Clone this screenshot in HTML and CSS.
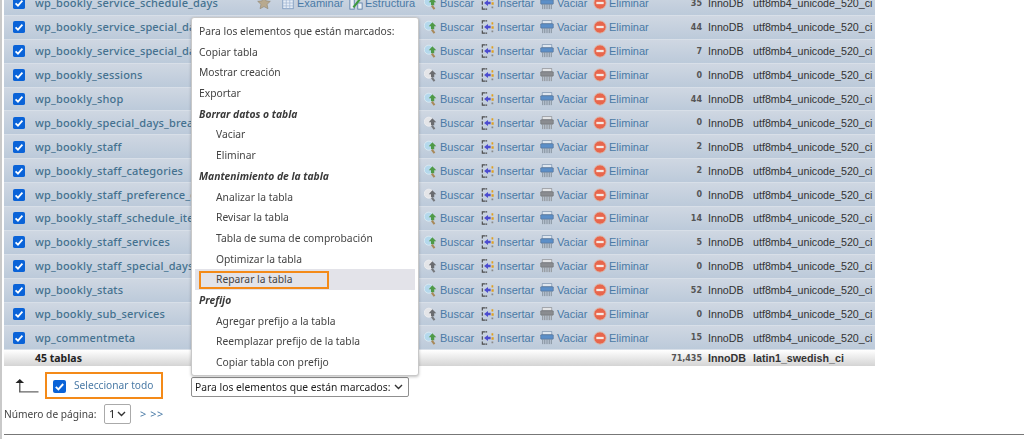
FILE: index.html
```html
<!DOCTYPE html>
<html lang="es">
<head>
<meta charset="utf-8">
<title>phpMyAdmin</title>
<link rel="stylesheet" href="styles.css">
</head>
<body>
<svg class="defs" width="0" height="0" aria-hidden="true">
  <symbol id="i-star" viewBox="0 0 16 16"><path d="M8 .8l2.200 4.700 5 .6-3.700 3.400 1 5L8 12.100l-4.500 2.400 1-5L.8 6.100l5-.6z" fill="#b8a98e" stroke="#8f8672" stroke-width=".7"/></symbol>
  <symbol id="i-browse" viewBox="0 0 16 16"><rect x="2" y="1.500" width="12" height="13" fill="#e6edf6" stroke="#7f9cc0"/><path d="M2 4.500h12M2 8h12M2 11.300h12M6 4.500v10M10 4.500v10" stroke="#9db4d2" stroke-width=".8"/></symbol>
  <symbol id="i-struct" viewBox="0 0 16 16"><rect x="1" y="1" width="5" height="14" fill="#eef2f7" stroke="#5b7ea8"/><rect x="10" y="8" width="5" height="7" fill="#eef2f7" stroke="#5b7ea8"/><path d="M5 13l8-10" stroke="#3d9a3d" stroke-width="2.400"/></symbol>
  <symbol id="i-search" viewBox="0 0 16 16"><circle cx="5.500" cy="6.500" r="5.200" fill="#b4d8ec" stroke="#e4f0f6" stroke-width=".8"/><path d="M9.500 2.500l4.500 4.700h-2.300v3.300H8V7.200H5.500z" fill="#4f9a48"/><path d="M9 11l3 4" stroke="#a8895a" stroke-width="2.400"/></symbol>
  <symbol id="i-search-off" viewBox="0 0 16 16"><circle cx="5.500" cy="6.500" r="5.200" fill="#e4e5e8" stroke="#f2f2f3" stroke-width=".8"/><path d="M9.500 2.500l4.500 4.700h-2.300v3.300H8V7.200H5.500z" fill="#6a6c70"/><path d="M9 11l3 4" stroke="#77797d" stroke-width="2.400"/></symbol>
  <symbol id="i-insert" viewBox="0 0 16 16"><path d="M4.500 1H1.500v3M1.500 6v4M1.500 12v3h3" fill="none" stroke="#4a4a4a" stroke-width="1.300"/><path d="M5 1h2M5 15h2" stroke="#4a4a4a" stroke-width="1.300"/><path d="M3.500 8L8 4.500v2h3v3H8v2z" fill="#4c4cd0"/><path d="M12 2.500h2v2.500h-2zM12 7h2.500v3H12z" fill="#e0a020"/><path d="M12 12h2v2h-2z" fill="#8a8a8a"/></symbol>
  <symbol id="i-empty" viewBox="0 0 16 16"><rect x="2.500" y=".8" width="11" height="3.500" fill="#dfe6ee" stroke="#6f88a6" stroke-width=".7"/><rect x=".8" y="4.300" width="14.400" height="5" rx=".6" fill="#5c8fc8" stroke="#557090" stroke-width=".7"/><path d="M3 9.500v5.500M5 9.500v5.500M7 9.500v5.500M9 9.500v5.500M11 9.500v5.500M13 9.500v5.500" stroke="#7a8794" stroke-width=".9"/></symbol>
  <symbol id="i-empty-off" viewBox="0 0 16 16"><rect x="2.500" y=".8" width="11" height="3.500" fill="#e3e4e6" stroke="#85878a" stroke-width=".7"/><rect x=".8" y="4.300" width="14.400" height="5" rx=".6" fill="#8a8c90" stroke="#6f7175" stroke-width=".7"/><path d="M3 9.500v5.500M5 9.500v5.500M7 9.500v5.500M9 9.500v5.500M11 9.500v5.500M13 9.500v5.500" stroke="#85878a" stroke-width=".9"/></symbol>
  <symbol id="i-drop" viewBox="0 0 16 16"><circle cx="8" cy="8" r="7" fill="#e8664c" stroke="#dcb5a5"/><rect x="3.800" y="6.700" width="8.400" height="2.600" fill="#f6e9e4"/></symbol>
  <symbol id="i-check" viewBox="0 0 13 13"><rect width="13" height="13" rx="2" fill="#0a63d8"/><path d="M2.800 6.800l2.600 2.600 4.800-5.400" fill="none" stroke="#fff" stroke-width="1.900"/></symbol>
</svg>

<div class="page">
  <div class="tables">
    <div class="row first"><svg class="cb"><use href="#i-check"/></svg><a class="name">wp_bookly_service_schedule_days</a><svg class="star"><use href="#i-star"/></svg><span class="act browse"><svg><use href="#i-browse"/></svg>Examinar</span><span class="act struct"><svg><use href="#i-struct"/></svg>Estructura</span><span class="act search"><svg><use href="#i-search"/></svg>Buscar</span><span class="act insert"><svg><use href="#i-insert"/></svg>Insertar</span><span class="act empty"><svg><use href="#i-empty"/></svg>Vaciar</span><span class="act drop"><svg><use href="#i-drop"/></svg>Eliminar</span><span class="num">35</span><span class="eng">InnoDB</span><span class="coll">utf8mb4_unicode_520_ci</span></div>
    <div class="row"><svg class="cb"><use href="#i-check"/></svg><a class="name">wp_bookly_service_special_days</a><span class="act search"><svg><use href="#i-search"/></svg>Buscar</span><span class="act insert"><svg><use href="#i-insert"/></svg>Insertar</span><span class="act empty"><svg><use href="#i-empty"/></svg>Vaciar</span><span class="act drop"><svg><use href="#i-drop"/></svg>Eliminar</span><span class="num">44</span><span class="eng">InnoDB</span><span class="coll">utf8mb4_unicode_520_ci</span></div>
    <div class="row"><svg class="cb"><use href="#i-check"/></svg><a class="name">wp_bookly_service_special_days_breaks</a><span class="act search"><svg><use href="#i-search"/></svg>Buscar</span><span class="act insert"><svg><use href="#i-insert"/></svg>Insertar</span><span class="act empty"><svg><use href="#i-empty"/></svg>Vaciar</span><span class="act drop"><svg><use href="#i-drop"/></svg>Eliminar</span><span class="num">7</span><span class="eng">InnoDB</span><span class="coll">utf8mb4_unicode_520_ci</span></div>
    <div class="row"><svg class="cb"><use href="#i-check"/></svg><a class="name">wp_bookly_sessions</a><span class="act search"><svg><use href="#i-search-off"/></svg>Buscar</span><span class="act insert"><svg><use href="#i-insert"/></svg>Insertar</span><span class="act empty"><svg><use href="#i-empty-off"/></svg>Vaciar</span><span class="act drop"><svg><use href="#i-drop"/></svg>Eliminar</span><span class="num">0</span><span class="eng">InnoDB</span><span class="coll">utf8mb4_unicode_520_ci</span></div>
    <div class="row"><svg class="cb"><use href="#i-check"/></svg><a class="name">wp_bookly_shop</a><span class="act search"><svg><use href="#i-search"/></svg>Buscar</span><span class="act insert"><svg><use href="#i-insert"/></svg>Insertar</span><span class="act empty"><svg><use href="#i-empty"/></svg>Vaciar</span><span class="act drop"><svg><use href="#i-drop"/></svg>Eliminar</span><span class="num">44</span><span class="eng">InnoDB</span><span class="coll">utf8mb4_unicode_520_ci</span></div>
    <div class="row"><svg class="cb"><use href="#i-check"/></svg><a class="name">wp_bookly_special_days_breaks</a><span class="act search"><svg><use href="#i-search-off"/></svg>Buscar</span><span class="act insert"><svg><use href="#i-insert"/></svg>Insertar</span><span class="act empty"><svg><use href="#i-empty-off"/></svg>Vaciar</span><span class="act drop"><svg><use href="#i-drop"/></svg>Eliminar</span><span class="num">0</span><span class="eng">InnoDB</span><span class="coll">utf8mb4_unicode_520_ci</span></div>
    <div class="row"><svg class="cb"><use href="#i-check"/></svg><a class="name">wp_bookly_staff</a><span class="act search"><svg><use href="#i-search"/></svg>Buscar</span><span class="act insert"><svg><use href="#i-insert"/></svg>Insertar</span><span class="act empty"><svg><use href="#i-empty"/></svg>Vaciar</span><span class="act drop"><svg><use href="#i-drop"/></svg>Eliminar</span><span class="num">2</span><span class="eng">InnoDB</span><span class="coll">utf8mb4_unicode_520_ci</span></div>
    <div class="row"><svg class="cb"><use href="#i-check"/></svg><a class="name">wp_bookly_staff_categories</a><span class="act search"><svg><use href="#i-search"/></svg>Buscar</span><span class="act insert"><svg><use href="#i-insert"/></svg>Insertar</span><span class="act empty"><svg><use href="#i-empty"/></svg>Vaciar</span><span class="act drop"><svg><use href="#i-drop"/></svg>Eliminar</span><span class="num">2</span><span class="eng">InnoDB</span><span class="coll">utf8mb4_unicode_520_ci</span></div>
    <div class="row"><svg class="cb"><use href="#i-check"/></svg><a class="name">wp_bookly_staff_preference_orders</a><span class="act search"><svg><use href="#i-search-off"/></svg>Buscar</span><span class="act insert"><svg><use href="#i-insert"/></svg>Insertar</span><span class="act empty"><svg><use href="#i-empty-off"/></svg>Vaciar</span><span class="act drop"><svg><use href="#i-drop"/></svg>Eliminar</span><span class="num">0</span><span class="eng">InnoDB</span><span class="coll">utf8mb4_unicode_520_ci</span></div>
    <div class="row"><svg class="cb"><use href="#i-check"/></svg><a class="name">wp_bookly_staff_schedule_items</a><span class="act search"><svg><use href="#i-search"/></svg>Buscar</span><span class="act insert"><svg><use href="#i-insert"/></svg>Insertar</span><span class="act empty"><svg><use href="#i-empty"/></svg>Vaciar</span><span class="act drop"><svg><use href="#i-drop"/></svg>Eliminar</span><span class="num">14</span><span class="eng">InnoDB</span><span class="coll">utf8mb4_unicode_520_ci</span></div>
    <div class="row"><svg class="cb"><use href="#i-check"/></svg><a class="name">wp_bookly_staff_services</a><span class="act search"><svg><use href="#i-search"/></svg>Buscar</span><span class="act insert"><svg><use href="#i-insert"/></svg>Insertar</span><span class="act empty"><svg><use href="#i-empty"/></svg>Vaciar</span><span class="act drop"><svg><use href="#i-drop"/></svg>Eliminar</span><span class="num">5</span><span class="eng">InnoDB</span><span class="coll">utf8mb4_unicode_520_ci</span></div>
    <div class="row"><svg class="cb"><use href="#i-check"/></svg><a class="name">wp_bookly_staff_special_days</a><span class="act search"><svg><use href="#i-search-off"/></svg>Buscar</span><span class="act insert"><svg><use href="#i-insert"/></svg>Insertar</span><span class="act empty"><svg><use href="#i-empty-off"/></svg>Vaciar</span><span class="act drop"><svg><use href="#i-drop"/></svg>Eliminar</span><span class="num">0</span><span class="eng">InnoDB</span><span class="coll">utf8mb4_unicode_520_ci</span></div>
    <div class="row"><svg class="cb"><use href="#i-check"/></svg><a class="name">wp_bookly_stats</a><span class="act search"><svg><use href="#i-search"/></svg>Buscar</span><span class="act insert"><svg><use href="#i-insert"/></svg>Insertar</span><span class="act empty"><svg><use href="#i-empty"/></svg>Vaciar</span><span class="act drop"><svg><use href="#i-drop"/></svg>Eliminar</span><span class="num">52</span><span class="eng">InnoDB</span><span class="coll">utf8mb4_unicode_520_ci</span></div>
    <div class="row"><svg class="cb"><use href="#i-check"/></svg><a class="name">wp_bookly_sub_services</a><span class="act search"><svg><use href="#i-search-off"/></svg>Buscar</span><span class="act insert"><svg><use href="#i-insert"/></svg>Insertar</span><span class="act empty"><svg><use href="#i-empty-off"/></svg>Vaciar</span><span class="act drop"><svg><use href="#i-drop"/></svg>Eliminar</span><span class="num">0</span><span class="eng">InnoDB</span><span class="coll">utf8mb4_unicode_520_ci</span></div>
    <div class="row"><svg class="cb"><use href="#i-check"/></svg><a class="name">wp_commentmeta</a><span class="act search"><svg><use href="#i-search"/></svg>Buscar</span><span class="act insert"><svg><use href="#i-insert"/></svg>Insertar</span><span class="act empty"><svg><use href="#i-empty"/></svg>Vaciar</span><span class="act drop"><svg><use href="#i-drop"/></svg>Eliminar</span><span class="num">15</span><span class="eng">InnoDB</span><span class="coll">utf8mb4_unicode_520_ci</span></div>
    <div class="row total"><span class="total-name">45 tablas</span><span class="num">71,435</span><span class="eng">InnoDB</span><span class="coll">latin1_swedish_ci</span></div>
  </div>

  <div class="bulk">
    <svg class="arrow" width="24" height="14" viewBox="0 0 24 14"><path d="M4 3.500h1.500v8.700H23.500v1.300H4z" fill="#666"/><path d="M4.800 0L.5 4h8.600z" fill="#222"/></svg>
    <label class="select-all"><svg class="cb"><use href="#i-check"/></svg>Seleccionar todo</label>
    <div class="fake-select">Para los elementos que están marcados:<svg class="chev" width="9" height="6" viewBox="0 0 9 6"><path d="M1 1l3.500 3.500L8 1" fill="none" stroke="#333" stroke-width="1.400"/></svg></div>
  </div>

  <div class="pager">
    <span class="pager-label">Número de página:</span>
    <div class="page-select">1<svg class="chev" width="9" height="6" viewBox="0 0 9 6"><path d="M1 1l3.500 3.500L8 1" fill="none" stroke="#333" stroke-width="1.400"/></svg></div>
    <a class="pager-next">&gt; &gt;&gt;</a>
  </div>
  <hr class="rule">

  <div class="menu">
    <div class="m-item">Para los elementos que están marcados:</div>
    <div class="m-item">Copiar tabla</div>
    <div class="m-item">Mostrar creación</div>
    <div class="m-item">Exportar</div>
    <div class="m-head">Borrar datos o tabla</div>
    <div class="m-item sub">Vaciar</div>
    <div class="m-item sub">Eliminar</div>
    <div class="m-head">Mantenimiento de la tabla</div>
    <div class="m-item sub">Analizar la tabla</div>
    <div class="m-item sub">Revisar la tabla</div>
    <div class="m-item sub">Tabla de suma de comprobación</div>
    <div class="m-item sub">Optimizar la tabla</div>
    <div class="m-item sub hover"><span class="mark">Reparar la tabla</span></div>
    <div class="m-head">Prefijo</div>
    <div class="m-item sub">Agregar prefijo a la tabla</div>
    <div class="m-item sub">Reemplazar prefijo de la tabla</div>
    <div class="m-item sub">Copiar tabla con prefijo</div>
  </div>
</div>
</body>
</html>
```
FILE: styles.css
```css
html, body { margin: 0; padding: 0; background: #fff; }
body { height: 439px; overflow: hidden; font-family: "Liberation Sans", Arial, sans-serif; color: #333; }
.defs { display: block; position: absolute; }
.page { position: relative; height: 439px; overflow: hidden; border-left: 2px solid #c9c9c9; box-sizing: border-box; padding-left: 2px; filter: blur(.25px); }

.tables { width: 871px; margin-top: -8px; }
.row { height: 23.900px; display: flex; align-items: center; font-size: 11px; color: #4a7aa6;
  background: linear-gradient(#cfd7e2, #bccada); border-bottom: 1px solid #d8dfe8; box-sizing: border-box; }
.row .cb { width: 12px; height: 12px; margin-left: 9px; flex: none; }
.name { width: 389px; margin-left: 10px; flex: none; white-space: nowrap; overflow: hidden; font: 500 11px "Noto Sans", sans-serif; letter-spacing: .16px; color: #44718f; line-height: 20px; }
.first .name { width: 222px; }
.star { width: 14px; height: 14px; margin-right: 10px; flex: none; }
.act { display: flex; align-items: center; flex: none; white-space: nowrap; color: #4a7aa6; font-size: 11px; }
.act svg { width: 14px; height: 14px; margin-right: 2px; flex: none; }
.browse { width: 68px; }
.struct { width: 75px; }
.search { width: 57px; }
.insert { width: 59px; }
.empty { width: 53px; }
.empty svg { margin-right: 3px; }
.drop { width: 60px; }
.num { width: 49px; text-align: right; flex: none; font: 700 8px "DejaVu Sans", sans-serif; color: #555; }
.eng { width: 39px; margin-left: 6px; flex: none; color: #333; font-size: 10.700px; }
.coll { margin-left: 6px; flex: none; color: #333; font-size: 10.700px; white-space: nowrap; }

.total { height: 15.500px; background: linear-gradient(#fff, #d4d4d4); border-bottom: 0; font-weight: 700; }
.total-name { width: 240px; margin-left: 31px; font: 700 10.500px "Noto Sans", sans-serif; color: #222; flex: none; }
.total .num { margin-left: 380px; width: 47px; }
.total .eng, .total .coll { font-weight: 700; }

.bulk { display: flex; align-items: flex-start; height: 27px; margin-top: 6px; }
.arrow { margin-left: 11px; margin-top: 7px; flex: none; }
.select-all { display: flex; align-items: center; gap: 8px; width: 118px; height: 27px; box-sizing: border-box; margin-left: 6px; padding-left: 6px;
  border: 2px solid #f48a18; color: #4a7aa6; font: 10.200px "Noto Sans", sans-serif; white-space: nowrap; }
.select-all .cb { width: 13px; height: 13px; flex: none; margin-top: 3px; }
.fake-select { display: flex; align-items: center; justify-content: space-between; margin-left: 28px; margin-top: 5px; width: 218px; height: 20px; box-sizing: border-box; padding: 0 5px 0 3px;
  border: 1px solid #8f8f8f; border-radius: 2px; background: #fff; color: #222; font: 10.300px "Noto Sans", sans-serif; white-space: nowrap; }
.pager { display: flex; align-items: center; height: 20px; margin-top: 5px; color: #444; font: 10.200px "Noto Sans", sans-serif; }
.pager-label { width: 91px; white-space: nowrap; }
.page-select { display: flex; align-items: center; justify-content: space-between; width: 27px; height: 20px; box-sizing: border-box; margin-left: 9px; padding: 0 4px; border: 1px solid #aaa; border-radius: 2px; font-size: 11px; color: #222; }
.pager-next { margin-left: 9px; color: #4a7aa6; font-size: 11px; letter-spacing: .5px; }
.rule { border: 0; height: 1px; background: #777; margin: 10px 0 0; }

.menu { position: absolute; left: 189px; top: 17px; width: 228px; height: 359px; box-sizing: border-box; padding: 3px; background: #fff;
  border: 1px solid #c8c8c8; border-radius: 3px; box-shadow: 0 1px 3px rgba(0,0,0,.25); font: 10.300px/20.700px "Noto Sans", sans-serif; color: #444; }
.m-item { padding-left: 4px; white-space: nowrap; height: 20.700px; }
.m-item.sub { padding-left: 21px; }
.m-head { padding-left: 4px; height: 20.700px; font-weight: 700; font-style: italic; color: #3a3a3a; }
.hover { background: #e3e3e9; position: relative; }
.mark { position: absolute; left: 4px; top: 2px; width: 130px; height: 18px; box-sizing: border-box; padding-left: 15px; line-height: 13px; border: 2px solid #f48a18; }
```
